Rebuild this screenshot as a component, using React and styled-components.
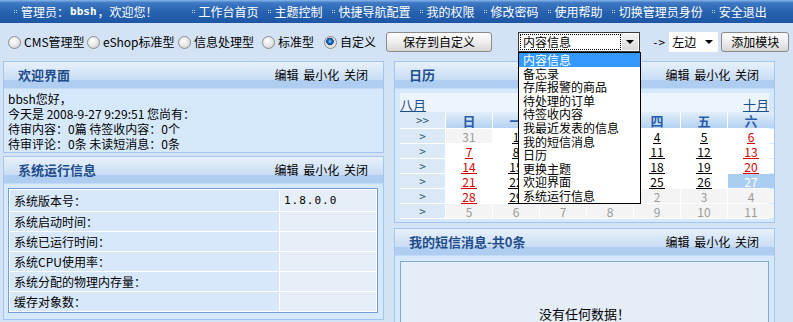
import React from "react";
import styled, { createGlobalStyle } from "styled-components";

const GlobalStyle = createGlobalStyle`
  body {
    margin: 0;
    background: #d3e2f5;
    font-family: "Noto Sans CJK SC", sans-serif;
    font-size: 12px;
    color: #000;
  }
`;

const TopBar = styled.div`
  height: 23px;
  background: linear-gradient(#86b5ea 0, #3f78c3 12%, #2763b0 50%, #1c56a5 100%);
  display: flex;
  align-items: center;
  padding-left: 13px;
  color: #fff;
  white-space: nowrap;
`;

const NavItem = styled.span`
  display: flex;
  align-items: center;
  line-height: 14px;
  margin-right: ${(p) => (p.$wide ? 33 : 8)}px;
`;

const Dots = styled.i`
  display: inline-block;
  width: 1px;
  height: 1px;
  margin: 0 6px 2px 1px;
  background: #b9d4f3;
  box-shadow: 2px 0 #b9d4f3, 0 2px #b9d4f3, 2px 2px #b9d4f3;
`;

const Bold = styled.b`
  font-family: "DejaVu Sans Mono", monospace;
  font-size: 11px;
  margin: 0 1px;
`;

const Toolbar = styled.div`
  height: 38px;
  display: flex;
  align-items: center;
  padding-left: 8px;
  white-space: nowrap;
`;

const RadioLabel = styled.label`
  display: flex;
  align-items: center;
  width: ${(p) => p.$w}px;
  flex: none;
  line-height: 14px;
`;

const RadioDot = styled.span`
  width: 13px;
  height: 13px;
  flex: none;
  box-sizing: border-box;
  border-radius: 50%;
  border: 1px solid #8d8d8d;
  margin-right: 3px;
  background: ${(p) =>
    p.$checked
      ? "radial-gradient(circle at 45% 40%, #7fd0ff 0, #1d6fc4 2px, #0b3e86 3.5px, #dcdcdc 4px, #f4f4f4 100%)"
      : "radial-gradient(circle at 40% 35%, #ffffff 0, #e2e2e2 60%, #bdbdbd 100%)"};
`;

const Button = styled.button`
  height: 20px;
  width: ${(p) => p.$w}px;
  margin-left: ${(p) => p.$ml || 0}px;
  flex: none;
  padding: 0;
  border: 1px solid #8a8a8a;
  border-radius: 3px;
  background: linear-gradient(#fefefe, #ececec 55%, #d6d6d6);
  font-family: "Noto Sans CJK SC", sans-serif;
  font-size: 12px;
  line-height: 16px;
  color: #000;
`;

const SelectWrap = styled.div`
  position: relative;
  margin-left: ${(p) => p.$ml}px;
`;

const SelectBox = styled.div`
  width: 122px;
  height: 20px;
  box-sizing: border-box;
  border: 1px solid #3a3a3a;
  background: #fff;
  display: flex;
  align-items: center;
  padding-left: 2px;
`;

const SelectText = styled.span`
  flex: 1;
  line-height: 14px;
  padding-left: 2px;
  outline: 1px dotted #000;
  margin-right: 2px;
`;

const SelectArrow = styled.span`
  width: 16px;
  height: 16px;
  background: ${(p) => (p.$flat ? "#fff" : "linear-gradient(#f2f2f2, #dadada)")};
  display: flex;
  align-items: center;
  justify-content: center;
  margin-right: 1px;
  &::after {
    content: "";
    border-left: 4px solid transparent;
    border-right: 4px solid transparent;
    border-top: 4px solid #000;
  }
`;

const DropList = styled.ul`
  position: absolute;
  top: 20px;
  left: 0;
  width: 123px;
  margin: 0;
  padding: 0;
  list-style: none;
  background: #fff;
  border: 1px solid #000;
  box-sizing: border-box;
  z-index: 10;
`;

const DropItem = styled.li`
  height: 13.6px;
  line-height: 13.6px;
  padding-left: 4px;
  background: ${(p) => (p.$active ? "#3399ff" : "#fff")};
  color: ${(p) => (p.$active ? "#fff" : "#000")};
`;

const Arrow = styled.span`
  margin-left: 12px;
  font-family: "DejaVu Sans Mono", monospace;
  font-size: 11px;
`;

const SmallSelect = styled.div`
  margin-left: 4px;
  width: 49px;
  height: 20px;
  background: #fff;
  display: flex;
  align-items: center;
  padding-left: 3px;
  box-sizing: border-box;
  line-height: 14px;
  span:first-child {
    flex: 1;
  }
`;

const Columns = styled.div`
  display: grid;
  grid-template-columns: 381px 381px;
  column-gap: 10px;
  padding-left: 3px;
  align-items: start;
`;

const Column = styled.div`
  display: flex;
  flex-direction: column;
  gap: ${(p) => p.$gap}px;
`;

const Panel = styled.section`
  border: 1px solid #a3c6ef;
  background: #d6e8fb;
`;

const PanelHead = styled.div`
  height: 26px;
  display: flex;
  align-items: center;
  justify-content: space-between;
  padding: 0 15px 0 14px;
  background: linear-gradient(#e8f1fc 0, #c9ddf4 68%, #afcdf0 69%, #afcdf0 100%);
  border-bottom: 1px solid #c2daf5;
`;

const PanelTitle = styled.h3`
  margin: 0;
  font-size: 13px;
  font-weight: bold;
  color: #1e4d8c;
  line-height: 16px;
  padding-bottom: 1px;
`;

const Actions = styled.span`
  line-height: 14px;
  word-spacing: 2px;
  padding-bottom: 1px;
`;

const WelcomeBody = styled.div`
  padding: 2px 4px 1px;
  line-height: 15px;
`;

const TableBody = styled.div`
  padding: 4px 5px 6px 4px;
`;

const InfoTable = styled.table`
  width: 370px;
  border: 1px solid #6f9ed7;
  border-collapse: separate;
  border-spacing: 1px;
  background: #fff;
`;

const InfoRow = styled.tr`
  height: ${(p) => (p.$first ? 21 : 19)}px;
`;

const InfoCell = styled.td`
  padding: 0 4px;
  line-height: 14px;
  background: ${(p) => (p.$value ? "#e6eef8" : "#d7e8fa")};
  width: ${(p) => (p.$value ? "88px" : "auto")};
  font-family: ${(p) => (p.$value ? '"DejaVu Sans Mono", monospace' : "inherit")};
  font-size: ${(p) => (p.$value ? "11px" : "12px")};
  letter-spacing: ${(p) => (p.$value ? "1px" : "0")};
`;

const CalBody = styled.div`
  padding: 4px 5px 3px;
`;

const CalBox = styled.div`
  background: #ecf4fc;
`;

const MonthRow = styled.div`
  display: flex;
  justify-content: space-between;
  align-items: flex-end;
  height: 19px;
`;

const MonthLink = styled.a`
  color: #1e4d8c;
  text-decoration: underline;
  line-height: 14px;
  font-size: 13px;
`;

const CalGrid = styled.div`
  display: grid;
  grid-template-columns: 45px repeat(7, 46px);
  grid-auto-rows: 14px;
  grid-template-rows: 16px;
  gap: 1px;
  background: #fff;
  padding-bottom: 1px;
`;

const WeekCell = styled.div`
  background: #dbe8f5;
  color: #2b5f6e;
  display: flex;
  align-items: center;
  justify-content: center;
  font-family: "DejaVu Sans Mono", monospace;
  font-size: 11px;
`;

const DayHead = styled.div`
  background: linear-gradient(#e3eefa, #b3d2f2);
  color: #2a5ea8;
  font-weight: bold;
  font-size: 13px;
  display: flex;
  align-items: center;
  justify-content: center;
`;

const DayCell = styled.div`
  display: flex;
  align-items: center;
  justify-content: center;
  font-size: 12px;
  background: ${(p) => (p.$today ? "#abcdf1" : p.$other ? "#f4f4f4" : "#fff")};
  color: ${(p) => (p.$today ? "#fff" : p.$other ? "#9a9a9a" : p.$weekend ? "#d40000" : "#000")};
  span {
    line-height: 11px;
    padding: 0 1px 1px;
    border-bottom: 1px solid ${(p) => (p.$today || p.$other ? "transparent" : "currentColor")};
    margin-top: 2px;
  }
`;

const MsgBody = styled.div`
  padding: 5px 5px 0 5px;
`;

const EmptyBox = styled.div`
  height: 100px;
  border: 1px solid #7ea9dd;
  background: #e4edf8;
  text-align: center;
  padding-top: 44px;
  line-height: 15px;
  font-size: 13px;
`;

const navLinks = ["工作台首页", "主题控制", "快捷导航配置", "我的权限", "修改密码", "使用帮助", "切换管理员身份", "安全退出"];
const modes = [
  ["CMS管理型", 79],
  ["eShop标准型", 91],
  ["信息处理型", 84],
  ["标准型", 62],
  ["自定义", 62],
];
const modules = ["内容信息", "备忘录", "存库报警的商品", "待处理的订单", "待签收内容", "我最近发表的信息", "我的短信消息", "日历", "更换主题", "欢迎界面", "系统运行信息"];
const infoRows = ["系统版本号：", "系统启动时间：", "系统已运行时间：", "系统CPU使用率：", "系统分配的物理内存量：", "缓存对象数："];
const weekdays = ["日", "一", "二", "三", "四", "五", "六"];

const weeks = [
  [31, 1, 2, 3, 4, 5, 6],
  [7, 8, 9, 10, 11, 12, 13],
  [14, 15, 16, 17, 18, 19, 20],
  [21, 22, 23, 24, 25, 26, 27],
  [28, 29, 30, 1, 2, 3, 4],
  [5, 6, 7, 8, 9, 10, 11],
];

function PanelHeader({ title }) {
  return (
    <PanelHead>
      <PanelTitle>{title}</PanelTitle>
      <Actions>编辑 最小化 关闭</Actions>
    </PanelHead>
  );
}

export default function App() {
  return (
    <>
      <GlobalStyle />
      <TopBar>
        <NavItem $wide>
          <Dots />
          管理员：<Bold>bbsh</Bold>，欢迎您！
        </NavItem>
        {navLinks.map((l) => (
          <NavItem key={l}>
            <Dots />
            {l}
          </NavItem>
        ))}
      </TopBar>

      <Toolbar>
        {modes.map(([m, w], i) => (
          <RadioLabel key={m} $w={w}>
            <RadioDot $checked={i === 4} />
            {m}
          </RadioLabel>
        ))}
        <Button $w={106}>保存到自定义</Button>
        <SelectWrap $ml={26}>
          <SelectBox>
            <SelectText>内容信息</SelectText>
            <SelectArrow />
          </SelectBox>
          <DropList>
            <DropItem $active>内容信息</DropItem>
            {modules.slice(1).map((m) => (
              <DropItem key={m}>{m}</DropItem>
            ))}
          </DropList>
        </SelectWrap>
        <Arrow>-&gt;</Arrow>
        <SmallSelect>
          <span>左边</span>
          <SelectArrow $flat />
        </SmallSelect>
        <Button $w={68} $ml={3}>添加模块</Button>
      </Toolbar>

      <Columns>
        <Column $gap={3}>
          <Panel>
            <PanelHeader title="欢迎界面" />
            <WelcomeBody>
              bbsh您好，
              <br />
              今天是 2008-9-27 9:29:51 您尚有：
              <br />
              待审内容：0篇 待签收内容：0个
              <br />
              待审评论：0条 未读短消息：0条
            </WelcomeBody>
          </Panel>
          <Panel>
            <PanelHeader title="系统运行信息" />
            <TableBody>
              <InfoTable>
                <tbody>
                  {infoRows.map((r, i) => (
                    <InfoRow key={r} $first={i === 0}>
                      <InfoCell>{r}</InfoCell>
                      <InfoCell $value>{i === 0 ? "1.8.0.0" : ""}</InfoCell>
                    </InfoRow>
                  ))}
                </tbody>
              </InfoTable>
            </TableBody>
          </Panel>
        </Column>

        <Column $gap={5}>
          <Panel>
            <PanelHeader title="日历" />
            <CalBody>
              <CalBox>
                <MonthRow>
                  <MonthLink>八月</MonthLink>
                  <MonthLink>十月</MonthLink>
                </MonthRow>
                <CalGrid>
                  <WeekCell>&gt;&gt;</WeekCell>
                  {weekdays.map((d) => (
                    <DayHead key={d}>{d}</DayHead>
                  ))}
                  {weeks.map((w, wi) => (
                    <React.Fragment key={wi}>
                      <WeekCell>&gt;</WeekCell>
                      {w.map((d, di) => {
                        const other = (wi === 0 && d > 7) || (wi >= 4 && d < 20);
                        return (
                          <DayCell
                            key={di}
                            $other={other}
                            $today={wi === 3 && d === 27}
                            $weekend={di === 0 || di === 6}
                          >
                            <span>{d}</span>
                          </DayCell>
                        );
                      })}
                    </React.Fragment>
                  ))}
                </CalGrid>
              </CalBox>
            </CalBody>
          </Panel>
          <Panel>
            <PanelHeader title="我的短信消息-共0条" />
            <MsgBody>
              <EmptyBox>没有任何数据！</EmptyBox>
            </MsgBody>
          </Panel>
        </Column>
      </Columns>
    </>
  );
}
